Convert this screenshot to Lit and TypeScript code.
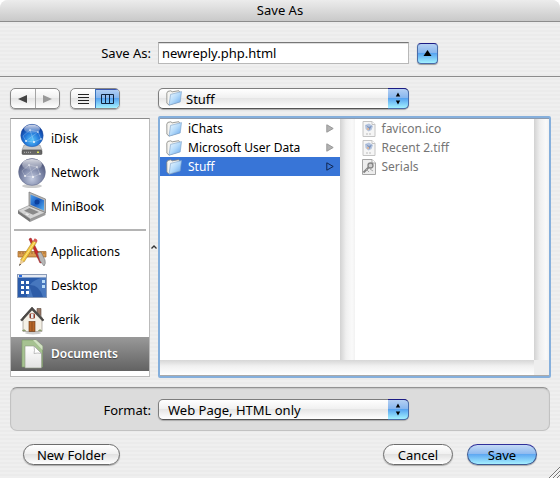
import { LitElement, html, svg, css, nothing, type TemplateResult } from "lit";
import { customElement, state } from "lit/decorators.js";
import { classMap } from "lit/directives/class-map.js";

const gradients = html`<svg class="defs" aria-hidden="true">
  <defs>
    <linearGradient id="folder" x1="0" y1="0" x2="1" y2="1">
      <stop offset="0" stop-color="#f2faff" /><stop offset=".5" stop-color="#b4dafa" /><stop offset="1" stop-color="#62a3ea" />
    </linearGradient>
    <radialGradient id="globe" cx=".5" cy=".7" r=".65">
      <stop offset="0" stop-color="#59c4fb" /><stop offset=".55" stop-color="#1f73d6" /><stop offset="1" stop-color="#0d3796" />
    </radialGradient>
    <radialGradient id="globe-grey" cx=".5" cy=".75" r=".7">
      <stop offset="0" stop-color="#c3cbe0" /><stop offset=".55" stop-color="#7d87a8" /><stop offset="1" stop-color="#4c5478" />
    </radialGradient>
    <linearGradient id="gloss" x1="0" y1="0" x2="0" y2="1">
      <stop offset="0" stop-color="#fff" stop-opacity=".8" /><stop offset="1" stop-color="#fff" stop-opacity=".1" />
    </linearGradient>
    <linearGradient id="screen" x1="0" y1="0" x2="1" y2="1">
      <stop offset="0" stop-color="#4da0ee" /><stop offset=".5" stop-color="#1b5cc0" /><stop offset="1" stop-color="#58b4f4" />
    </linearGradient>
    <linearGradient id="paper" x1="0" y1="0" x2="0" y2="1">
      <stop offset="0" stop-color="#ffffff" /><stop offset="1" stop-color="#e2e2e2" />
    </linearGradient>
  </defs>
</svg>`;

const network = svg`
  <g stroke="#fff" stroke-opacity=".45" stroke-width=".5" fill="none">
    <path d="M5 14L12 8L20 10L23 17L16 20L8 19L5 14M12 8L16 20M20 10L8 19" />
  </g>
  <g fill="#fff" fill-opacity=".9">
    <circle cx="12" cy="8" r=".8" /><circle cx="20" cy="10" r=".8" /><circle cx="16" cy="20" r="1" />
    <circle cx="8" cy="19" r=".9" /><circle cx="23" cy="17" r=".8" />
  </g>`;

const folderIcon = html`<svg class="folder" viewBox="0 0 16 16" aria-hidden="true">
  <path d="M.8 3.2L1.8 1.4L4.8 .8L6.2 1.8L12.8 .7L13.6 2L12.6 12L3 15L.9 13.2Z" fill="#f4f4f1" stroke="#84847f" stroke-width=".8" />
  <path d="M4.6 4.4L15.5 1.6L14.2 12L3 15.2Z" fill="url(#folder)" stroke="#7a9fc8" stroke-width=".6" />
</svg>`;

const pictureIcon = html`<svg class="file" viewBox="0 0 14 16" aria-hidden="true">
  <path d="M1 .5H10L13 3.5V15.5H1Z" fill="#f5f5f5" stroke="#c4c4c4" />
  <path d="M10 .5V3.5H13" fill="#fff" stroke="#c4c4c4" />
  <path d="M3 4L7 2.5L11 5L9.5 9L6.5 10.5L3.5 8Z" fill="#b4c4de" />
  <path d="M4 4L7 6L10 4.5L7.5 9Z" fill="#7d94bd" /><circle cx="6" cy="8" r="1.2" fill="#d9b59c" />
  <path d="M4 13H10" stroke="#bbb" stroke-dasharray="2 1" />
</svg>`;

const keyIcon = html`<svg class="file" viewBox="0 0 14 16" aria-hidden="true">
  <path d="M.5 .5H10L13.5 4V15.5H.5Z" fill="#ededed" stroke="#a5a5a5" />
  <path d="M10 .5V4H13.5" fill="#fff" stroke="#a5a5a5" />
  <path d="M1.5 13.5L7 8" stroke="#858585" stroke-width="2" />
  <circle cx="8.5" cy="6.5" r="2.5" fill="#d0d0d0" stroke="#858585" stroke-width="1.3" />
  <path d="M4 10L7 13M8 10L11 12" stroke="#aaa" />
</svg>`;

interface Place { name: string; icon: TemplateResult; }

const devices: Place[] = [
  { name: "iDisk", icon: html`<svg viewBox="0 0 30 32" aria-hidden="true">
      <path d="M7 22H23L25 27H5Z" fill="#c9c9c9" stroke="#888" stroke-width=".5" />
      <rect x="5" y="27" width="20" height="4.5" rx="1" fill="#666" stroke="#444" stroke-width=".5" />
      <path d="M7 29.3H15" stroke="#bbb" stroke-dasharray="1 1" /><rect x="20" y="28.5" width="2" height="1.5" fill="#dfe75a" />
      <circle cx="15" cy="12.5" r="11.2" fill="url(#globe)" stroke="#2a5ba6" stroke-width=".5" />
      <g transform="translate(1 -1)">${network}</g>
      <ellipse cx="15" cy="6" rx="8" ry="4.2" fill="url(#gloss)" /></svg>` },
  { name: "Network", icon: html`<svg viewBox="0 0 30 32" aria-hidden="true">
      <ellipse cx="15" cy="29" rx="10" ry="2" fill="#ccc" />
      <circle cx="15" cy="15" r="13.4" fill="url(#globe-grey)" stroke="#646c8c" stroke-width=".5" />
      ${network}<ellipse cx="15" cy="7.5" rx="10" ry="5.5" fill="url(#gloss)" /></svg>` },
  { name: "MiniBook", icon: html`<svg viewBox="0 0 30 32" aria-hidden="true">
      <path d="M1 19.5L13 27.5V31L1 22.5Z" fill="#777" /><path d="M13 27.5L28.5 21V24L13 31Z" fill="#9b9b9b" />
      <path d="M1 19.5L12 14.5L28.5 21.5L13.5 28Z" fill="#d5d5d5" stroke="#888" stroke-width=".6" />
      <path d="M7 19.7L12.5 17L22 21L16 23.8Z" fill="#8a8a8a" /><path d="M7 23L10 21.8L13 23.8L10.5 25Z" fill="#eee" stroke="#aaa" stroke-width=".4" />
      <path d="M12 1L28.5 8V21.5L12 14.5Z" fill="#b5b5b5" stroke="#777" stroke-width=".7" />
      <path d="M13.5 3.5L27 9.3V19.5L13.5 13.7Z" fill="url(#screen)" />
      <circle cx="20" cy="11" r="2.5" fill="#0c3f9c" /></svg>` },
];

const folders: Place[] = [
  { name: "Applications", icon: html`<svg viewBox="0 0 30 32" aria-hidden="true">
      <path d="M1 15.5H29V21H1Z" fill="#d99a50" stroke="#9b6326" stroke-width=".7" />
      <path d="M3 16V18M6 16V18M9 16V18M12 16V18M15 16V18M18 16V18M21 16V18M24 16V18M27 16V18" stroke="#8a571f" stroke-width=".7" />
      <path d="M12 3L14 2L26 26L23 27Z" fill="#c92a2d" stroke="#8c1518" stroke-width=".5" />
      <path d="M20.5 17L24 16L28 24Q29 28 27 30L23 25Z" fill="#b7b7b7" stroke="#666" stroke-width=".5" />
      <path d="M16 5L19.5 6.5L7 26L3.5 24Z" fill="#f3c63d" stroke="#9c721e" stroke-width=".5" />
      <path d="M16 5L17.5 2.5Q20 2 20.5 5L19.5 6.5Z" fill="#d65b56" />
      <path d="M18 5.8L5 25" stroke="#fff0a0" stroke-width=".7" /><path d="M3.5 24L7 26L2.2 29.8Z" fill="#eacb98" /><path d="M2.8 27.8L4 28.5L2 30Z" fill="#222" /></svg>` },
  { name: "Desktop", icon: html`<svg viewBox="0 0 30 32" aria-hidden="true">
      <rect x=".5" y="4.5" width="29" height="23" fill="#2b5cab" stroke="#8a9bb8" />
      <path d="M10 27Q9 12 24 8H29V27Z" fill="#5686c8" opacity=".65" /><path d="M12 15Q22 14 26 27H16Z" fill="#1e4b98" opacity=".6" />
      <rect x="1" y="5" width="28" height="2.5" fill="#e4e9f2" /><rect x="2" y="5" width="3" height="2" fill="#2c6de0" />
      <g fill="#fff"><path d="M4 11h3v3h-3zM9 11h3v3h-3zM4 16h3v3h-3zM9 16h3v3h-3zM4 21h3v3h-3zM9 21h3v3h-3z" /></g>
      <path d="M25 10h3v3h-3zM25 15h3v3h-3z" fill="#b8dcf8" /></svg>` },
  { name: "derik", icon: html`<svg viewBox="0 0 30 32" aria-hidden="true">
      <ellipse cx="16" cy="29" rx="8" ry="1.5" fill="#ccc" />
      <path d="M20 4.5H24V12L20 8Z" fill="#9a7a68" stroke="#5b463b" stroke-width=".6" />
      <path d="M6 13L15 5L25 13V27.5H6Z" fill="#f4f0e6" stroke="#8a857a" stroke-width=".6" />
      <path d="M3.5 16L15 3L27 16L25.5 17L15 6L5 17Z" fill="#4d4947" stroke="#2c2a28" stroke-width=".5" />
      <rect x="12.5" y="9.5" width="5.5" height="5" rx="1" fill="#8f3b28" /><rect x="14" y="10" width="2.5" height="4" fill="#e4ecf0" />
      <rect x="12" y="17.5" width="6" height="10" fill="#b76527" stroke="#673413" stroke-width=".6" /><path d="M15 18V27" stroke="#673413" stroke-width=".5" />
      <path d="M5 27Q7 24 9 27M21 27Q23 24 25 27" fill="#8a9c6d" stroke="#8a9c6d" stroke-width=".5" /></svg>` },
  { name: "Documents", icon: html`<svg viewBox="0 0 30 32" aria-hidden="true">
      <path d="M5 2H19L25.5 8V29H5Z" fill="#a6c291" stroke="#7d9c68" stroke-width=".6" />
      <path d="M16 2H19L25.5 8V12Z" fill="#d2e2c4" />
      <path d="M8 8H17L24.5 15.5V30H8Z" fill="url(#paper)" stroke="#8b9381" stroke-width=".6" />
      <path d="M17 8Q18 13 17 15.5Q21 14.5 24.5 15.5Z" fill="#fff" stroke="#999" stroke-width=".6" /></svg>` },
];

@customElement("app-root")
export class AppRoot extends LitElement {
  @state() private place = "Documents";
  @state() private folder = "Stuff";

  static styles = css`
    :host {
      display: block;
      font: 13px/18px "Noto Sans", "Open Sans", sans-serif;
      color: #000;
      background: #fff;
    }
    * { box-sizing: border-box; }
    button, select, input { font: inherit; color: inherit; margin: 0; outline: none; }
    button { padding: 0; border: 0; background: none; }
    ul { list-style: none; margin: 0; padding: 0; }
    svg { display: block; }
    .defs { position: absolute; width: 0; height: 0; }
    .window {
      display: flex;
      flex-direction: column;
      min-height: 100vh;
      border-radius: 8px 8px 0 0;
      overflow: hidden;
      background: repeating-linear-gradient(#efefef 0 2px, #ebebeb 2px 4px);
    }
    .title {
      height: 22px;
      margin: 0;
      font: inherit;
      line-height: 20px;
      text-align: center;
      border-bottom: 1px solid #8c8c8c;
      background: linear-gradient(#ececec, #c9c9c9);
    }
    .row { display: grid; grid-template-columns: 148px minmax(0, 251px) 1fr; align-items: center; }
    .name { padding: 20px 10px 12px; border-bottom: 1px solid #8c8c8c; }
    .label { padding-right: 7px; text-align: right; }
    .text {
      width: 100%;
      height: 22px;
      padding: 0 3px;
      border: 1px solid #b8b8b8;
      border-top: 1px solid #777;
      border-radius: 0;
      background: #fff;
      box-shadow: inset 0 1px #ddd;
    }
    .blue { background: linear-gradient(#b5d0f3 0, #85b5ee 48%, #58a4f0 50%, #a2f1ff 100%); }
    .collapse {
      display: grid;
      place-items: center;
      width: 21px;
      height: 21px;
      margin-left: 8px;
      border: 1px solid #4a6ca8;
      border-top-color: #1b1b84;
      border-radius: 4px;
      box-shadow: 0 1px 1px #999;
    }
    .collapse svg { width: 9px; height: 6px; }
    .bar { padding: 11px 10px 7px; }
    .switches { display: flex; gap: 10px; }
    .segments {
      display: flex;
      width: 50px;
      height: 21px;
      border: 1px solid #888;
      border-radius: 5px;
      overflow: hidden;
      background: linear-gradient(#fff, #efefef 48%, #e4e4e4 50%, #fff);
      box-shadow: 0 1px 1px #aaa;
    }
    .segments button { flex: 1; display: grid; place-items: center; }
    .segments button + button { border-left: 1px solid #a5a5a5; }
    .segments .blue { border-left-color: #3874bd; box-shadow: inset 0 1px #3a56b0; }
    .segments svg { width: 14px; height: 12px; }
    .popup { position: relative; height: 21px; }
    .popup select {
      width: 100%;
      height: 21px;
      padding: 0 26px 0 9px;
      appearance: none;
      border: 1px solid #7d7d7d;
      border-bottom-color: #555;
      border-radius: 5px;
      background: linear-gradient(#fff, #f0f0f0 48%, #e6e6e6 50%, #fff);
      box-shadow: 0 1px 1px #aaa;
      line-height: 18px;
    }
    .popup .iconic { padding-left: 27px; }
    .popup .folder { position: absolute; left: 8px; top: 2px; }
    .arrows {
      position: absolute;
      top: 0;
      right: 0;
      width: 21px;
      height: 21px;
      border: 1px solid #4a6ca8;
      border-top-color: #1b1b84;
      border-left: 0;
      border-radius: 0 5px 5px 0;
      pointer-events: none;
      display: grid;
      place-items: center;
    }
    .arrows svg { width: 6px; height: 13px; }
    .panes { flex: 1; display: grid; grid-template-columns: 140px 8px minmax(0, 1fr); padding: 0 9px 0 10px; }
    .places { margin: 2px 0 1px; padding: 3px 0 4px; border: 1px solid #bbb; border-top-color: #8c8c8c; background: #fff; font-size: 12px; }
    .places button { display: flex; align-items: center; gap: 4px; width: 100%; height: 34px; padding-left: 6px; text-align: left; }
    .places svg { width: 30px; height: 32px; }
    .places .chosen { background: linear-gradient(#999, #626262); color: #fff; font-weight: 600; text-shadow: 0 1px 1px #444; }
    .rule { height: 2px; margin: 5px 3px 4px; border: 0; background: #b4b4b4; }
    .grip { display: grid; place-items: center; }
    .grip svg { width: 6px; height: 4px; }
    .browser { display: flex; flex-direction: column; border: 2px solid #85afdc; border-radius: 2px; background: #fff; box-shadow: inset 0 1px #8c9aad; font-size: 12px; }
    .columns { flex: 1; display: grid; grid-template-columns: minmax(0, 1fr) 15px minmax(0, 1fr) 15px; padding-top: 1px; }
    .track { background: linear-gradient(90deg, #d2d2d2, #efefef 40%, #fafafa 80%, #f2f2f2); }
    .foot { display: grid; grid-template-columns: 1fr 15px; height: 16px; border-bottom: 1px solid #aaa; }
    .trough { background: linear-gradient(#d6d6d6, #f0f0f0 40%, #fff); }
    .corner { background: #eee; }
    .columns button { display: flex; align-items: center; width: 100%; height: 19px; text-align: left; }
    .folders button { gap: 6px; padding: 0 6px; }
    .folders .chosen { background: #3875d7; color: #fff; }
    .folders .word { flex: 1; white-space: nowrap; }
    .folders .next { width: 8px; height: 9px; }
    .files button { gap: 6px; padding-left: 7px; color: #757575; }
    .folder { width: 16px; height: 16px; }
    .file { width: 14px; height: 16px; }
    .format {
      margin: 9px 10px 0;
      padding: 11px 0 10px;
      border: 1px solid #c2c2c2;
      border-top-color: #929292;
      border-radius: 7px;
      background: #dcdcdc;
      box-shadow: inset 0 1px 1px #c4c4c4;
    }
    .format .row { grid-template-columns: 147px minmax(0, 251px) 1fr; }
    .actions { position: relative; display: flex; gap: 14px; padding: 13px 23px; }
    .pill {
      width: 70px;
      height: 21px;
      border: 1px solid #6c6c6c;
      border-radius: 11px;
      background: linear-gradient(#fff, #f0f0f0 48%, #e2e2e2 50%, #fff);
      box-shadow: 0 1px 1px #aaa;
      line-height: 18px;
    }
    .pill.wide { width: 97px; margin-right: auto; }
    .pill.blue { border-color: #3d5a92; border-top-color: #30309a; background: linear-gradient(#c5daf6, #8cb9ef 48%, #5fa9f2 50%, #a5efff); }
    .resize { position: absolute; right: 0; bottom: 0; width: 12px; height: 12px; }
  `;

  private placeRow(p: Place) {
    return html`<li><button class=${classMap({ chosen: p.name === this.place })} @click=${() => (this.place = p.name)}>
      ${p.icon}<span>${p.name}</span></button></li>`;
  }

  private folderRow(name: string) {
    const chosen = name === this.folder;
    return html`<li><button class=${classMap({ chosen })} @click=${() => (this.folder = name)}>
      ${folderIcon}<span class="word">${name}</span>
      <svg class="next" viewBox="0 0 8 9" aria-hidden="true"><path d="M.8 .8V8.2L7.2 4.5Z" fill=${chosen ? "none" : "#b2b2b2"} stroke=${chosen ? "#12264f" : "#999"} /></svg>
    </button></li>`;
  }

  private popup(id: string, label: string | typeof nothing, options: string[], icon: TemplateResult | typeof nothing = nothing) {
    return html`<div class="popup">
      <select id=${id} aria-label=${label} class=${classMap({ iconic: icon !== nothing })}>
        ${options.map((o) => html`<option>${o}</option>`)}
      </select>
      ${icon}
      <span class="arrows blue"><svg viewBox="0 0 6 13" aria-hidden="true"><path d="M3 .5L5.2 4.5H.8ZM3 12.5L5.2 8.5H.8Z" /></svg></span>
    </div>`;
  }

  render() {
    return html`${gradients}
      <main class="window">
        <h1 class="title">Save As</h1>
        <div class="row name">
          <label class="label" for="filename">Save As:</label>
          <input class="text" id="filename" type="text" value="newreply.php.html" spellcheck="false" />
          <button class="collapse blue" aria-label="Collapse"><svg viewBox="0 0 9 6"><path d="M4.5 0L8.5 6H.5Z" /></svg></button>
        </div>
        <div class="row bar">
          <div class="switches">
            <div class="segments">
              <button aria-label="Back"><svg viewBox="0 0 14 12"><path d="M11 2V10L2 6Z" fill="#444" /></svg></button>
              <button aria-label="Forward"><svg viewBox="0 0 14 12"><path d="M3 2V10L12 6Z" fill="#999" /></svg></button>
            </div>
            <div class="segments">
              <button aria-label="List view"><svg viewBox="0 0 14 12"><path d="M2 1.5H13M2 4.5H13M2 7.5H13M2 10.5H13" stroke="#222" /></svg></button>
              <button class="blue" aria-label="Column view"><svg viewBox="0 0 14 12"><path d="M1.5 1.5H13.5V10.5H1.5ZM5.5 1.5V10.5M9.5 1.5V10.5" fill="none" stroke="#10243f" /></svg></button>
            </div>
          </div>
          ${this.popup("location", "Location", ["Stuff"], folderIcon)}
        </div>
        <div class="panes">
          <nav class="places" aria-label="Places">
            <ul>${devices.map((p) => this.placeRow(p))}</ul>
            <hr class="rule" />
            <ul>${folders.map((p) => this.placeRow(p))}</ul>
          </nav>
          <div class="grip"><svg viewBox="0 0 6 4" aria-hidden="true"><path d="M.5 3.5L3 1L5.5 3.5" fill="none" stroke="#333" stroke-width="1.3" /></svg></div>
          <section class="browser" aria-label="Files">
            <div class="columns">
              <ul class="folders">${["iChats", "Microsoft User Data", "Stuff"].map((n) => this.folderRow(n))}</ul>
              <div class="track"></div>
              <ul class="files">
                <li><button disabled>${pictureIcon}<span>favicon.ico</span></button></li>
                <li><button disabled>${pictureIcon}<span>Recent 2.tiff</span></button></li>
                <li><button disabled>${keyIcon}<span>Serials</span></button></li>
              </ul>
              <div class="track"></div>
            </div>
            <div class="foot"><div class="trough"></div><div class="corner"></div></div>
          </section>
        </div>
        <div class="format">
          <div class="row">
            <label class="label" for="format">Format:</label>
            ${this.popup("format", nothing, ["Web Page, HTML only"])}
          </div>
        </div>
        <div class="actions">
          <button class="pill wide">New Folder</button>
          <button class="pill">Cancel</button>
          <button class="pill blue">Save</button>
          <svg class="resize" viewBox="0 0 12 12" aria-hidden="true">
            <path d="M1 12L12 1M5 12L12 5M9 12L12 9" stroke="#777" /><path d="M2 12L12 2M6 12L12 6M10 12L12 10" stroke="#fff" stroke-width=".6" />
          </svg>
        </div>
      </main>`;
  }
}
